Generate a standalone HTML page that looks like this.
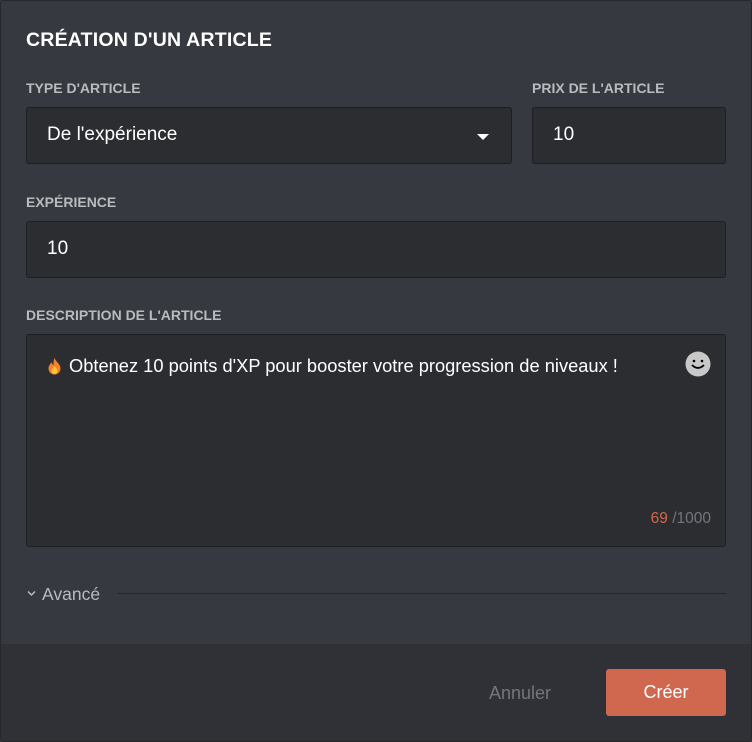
<!DOCTYPE html><html><head><style>
body{margin:0;background:#36393f;font-family:"Liberation Sans","DejaVu Sans",sans-serif;}
.m{position:relative;width:750px;height:740px;border:1px solid #26282c;border-radius:4px;background:#36393f;overflow:hidden}
.a{position:absolute}
h1{position:absolute;left:25px;top:28px;margin:0;font-size:19.5px;font-weight:bold;color:#fff;letter-spacing:.2px}
.l{position:absolute;font-size:14px;font-weight:bold;color:#b9bbbe}
.i{position:absolute;background:#2b2d31;border:1px solid #1e1f23;border-radius:3px;box-sizing:border-box;color:#fff;font-size:19px;padding-left:20px;line-height:54px}
</style></head><body><div class="m">
<h1>CRÉATION D'UN ARTICLE</h1>
<div class="l" style="left:25px;top:79px">TYPE D'ARTICLE</div>
<div class="l" style="left:531px;top:79px">PRIX DE L'ARTICLE</div>
<div class="i" style="left:25px;top:106px;width:486px;height:57px">De l'expérience<div class="a" style="right:22px;top:26px;width:0;height:0;border-left:6px solid transparent;border-right:6px solid transparent;border-top:6px solid #fff"></div></div>
<div class="i" style="left:531px;top:106px;width:194px;height:57px">10</div>
<div class="l" style="left:25px;top:193px">EXPÉRIENCE</div>
<div class="i" style="left:25px;top:220px;width:700px;height:57px">10</div>
<div class="l" style="left:25px;top:306px">DESCRIPTION DE L'ARTICLE</div>
<div class="i" style="left:25px;top:333px;width:700px;height:213px;line-height:normal;padding-top:20px;font-size:18.3px"><svg width="15" height="18" viewBox="0 0 15 18" style="vertical-align:-3px;margin-right:7px"><path d="M7.5 1C9 5 13.5 7 13.5 11.5A6 6 0 0 1 1.5 11.5C1.5 8.5 3.5 7 4.5 5C5 7 6 8 6.5 8C6.5 5 6.5 3 7.5 1Z" fill="#f4802a"/><path d="M7.5 9C9 11 10.5 12 10.5 14A3 3 0 0 1 4.5 14C4.5 12 6 11 7.5 9Z" fill="#ffc23a"/></svg>Obtenez 10 points d'XP pour booster votre progression de niveaux !
<svg class="a" style="right:14px;top:16px" width="26" height="26" viewBox="0 0 26 26"><circle cx="13" cy="13" r="12.5" fill="#c8c8c8"/><circle cx="9" cy="10" r="1.3" fill="#000"/><circle cx="17" cy="10" r="1.3" fill="#000"/><path d="M7 14q6 6 12 0" stroke="#000" stroke-width="1.8" fill="none"/></svg>
<div class="a" style="right:14px;bottom:18px;font-size:15.5px;color:#72767d"><span style="color:#d0684f">69</span> /1000</div></div>
<svg class="a" style="left:26px;top:589px" width="9" height="7" viewBox="0 0 9 7"><path d="M1 1.5L4.5 5L8 1.5" stroke="#b9bbbe" stroke-width="1.5" fill="none"/></svg>
<div class="a" style="left:41px;top:583px;color:#b9bbbe;font-size:17.5px">Avancé</div>
<div class="a" style="left:116px;top:592px;width:609px;height:1px;background:#26282c"></div>
<div class="a" style="left:0;top:643px;width:750px;height:100px;background:#2f3136"></div>
<div class="a" style="left:488px;top:682px;color:#72767d;font-size:18px">Annuler</div>
<div class="a" style="left:605px;top:668px;width:120px;height:47px;background:#d0684f;border-radius:3px;color:#fff;font-size:18px;text-align:center;line-height:47px">Créer</div>
</div></body></html>
